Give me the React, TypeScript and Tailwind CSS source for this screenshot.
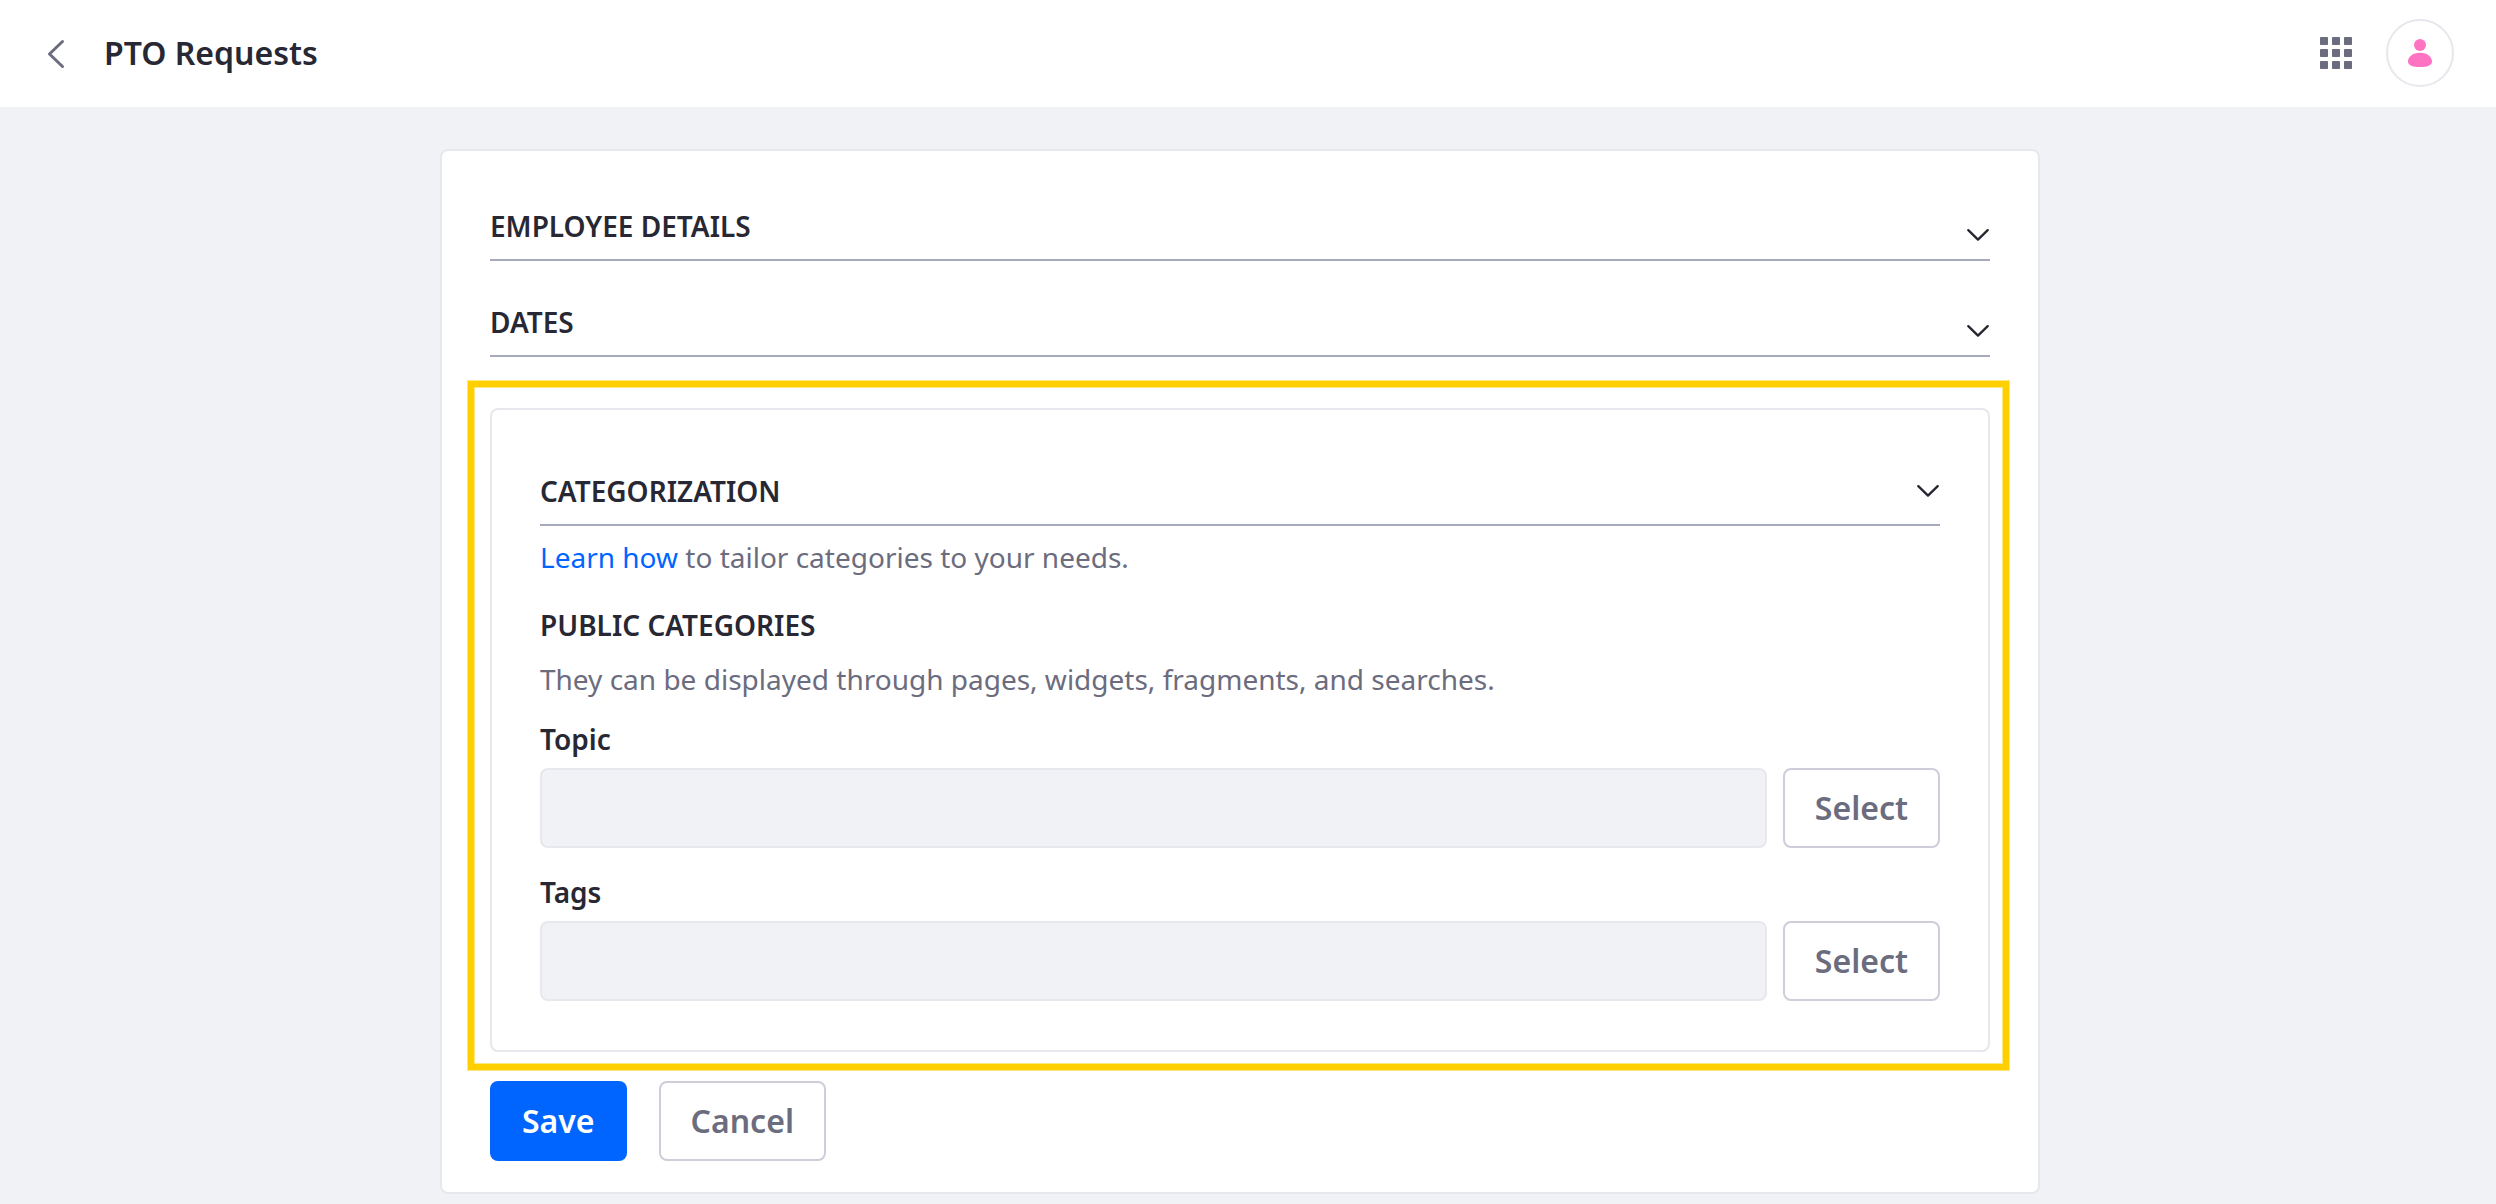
import { useState } from "react";
import type { ReactNode } from "react";

function ChevronDown() {
  return (
    <svg className="size-6 shrink-0" viewBox="0 0 24 24" fill="none" aria-hidden="true">
      <path
        d="M2.3 7.2 12 16.6l9.700-9.400"
        stroke="currentColor"
        strokeWidth="2.4"
        strokeLinecap="round"
        strokeLinejoin="round"
      />
    </svg>
  );
}

function SectionToggle({ title, align }: { title: string; align: "end" | "center" }) {
  const [open, setOpen] = useState(align === "center");
  return (
    <h2>
      <button
        type="button"
        aria-expanded={open}
        onClick={() => setOpen(!open)}
        className={
          align === "end"
            ? "flex w-full items-end justify-between border-b-2 border-[#a7a9bc] pb-3 text-left font-semibold uppercase"
            : "flex w-full items-center justify-between border-b-2 border-[#a7a9bc] pb-3 text-left font-semibold uppercase"
        }
      >
        <span>{title}</span>
        <ChevronDown />
      </button>
    </h2>
  );
}

function OutlineButton({ children, label }: { children: ReactNode; label?: string }) {
  return (
    <button
      type="button"
      aria-label={label}
      className="h-20 shrink-0 rounded-lg border-2 border-[#cdced9] bg-white px-[30px] text-[32px] leading-[48px] font-semibold text-[#6b6c7e]"
    >
      {children}
    </button>
  );
}

function SelectField({ id, label }: { id: string; label: string }) {
  return (
    <div className="flex flex-col gap-2">
      <label htmlFor={id} className="font-semibold">
        {label}
      </label>
      <div className="flex gap-4">
        <input
          id={id}
          type="text"
          className="h-20 min-w-0 flex-1 rounded-lg border-2 border-[#e7e7ed] bg-[#f1f2f5] px-6"
        />
        <OutlineButton label={`Select ${label}`}>Select</OutlineButton>
      </div>
    </div>
  );
}

function Header() {
  const cells = [0, 12, 24];
  return (
    <header className="flex h-[107px] items-center bg-white pr-[42px] pb-px pl-10">
      <a href="#back" aria-label="Back" className="text-[#6b6c7e]">
        <svg className="size-8" viewBox="0 0 32 32" fill="none" aria-hidden="true">
          <path
            d="M22.500 4.500 9.500 17l13 12.500"
            stroke="currentColor"
            strokeWidth="3"
            strokeLinecap="round"
            strokeLinejoin="round"
          />
        </svg>
      </a>
      <h1 className="ml-8 text-[32px] leading-[48px] font-semibold">PTO Requests</h1>
      <div className="ml-auto flex items-center gap-[34px]">
        <button type="button" aria-label="Applications" className="text-[#6b6c7e]">
          <svg className="size-8" viewBox="0 0 32 32" fill="currentColor" aria-hidden="true">
            {cells.map((y) =>
              cells.map((x) => <rect key={`${x}-${y}`} x={x} y={y} width="8" height="8" rx="0.8" />),
            )}
          </svg>
        </button>
        <button
          type="button"
          aria-label="User profile"
          className="flex size-[68px] items-center justify-center rounded-full border-2 border-[#e7e7ed] text-[#ff73c3]"
        >
          <svg className="h-7 w-6" viewBox="0 0 24 28" fill="currentColor" aria-hidden="true">
            <circle cx="12" cy="6" r="6" />
            <path d="M12 13.800c7.500 0 12 4.200 12 8.600 0 4-4.800 5.600-12 5.600s-12-1.600-12-5.600c0-4.400 4.500-8.600 12-8.600Z" />
          </svg>
        </button>
      </div>
    </header>
  );
}

export default function App() {
  return (
    <div className="min-h-screen bg-[#f1f2f5] font-['Noto_Sans',sans-serif] text-[28px] leading-[42px] text-[#272833]">
      <Header />
      <main className="pt-[42px] pr-4 pb-2.5">
        <form className="mx-auto max-w-[1600px] rounded-lg border-2 border-[#e7e7ed] bg-white px-12 pt-[54px] pb-[31px]">
          <div className="flex flex-col gap-10">
            <SectionToggle title="Employee Details" align="end" />
            <SectionToggle title="Dates" align="end" />
          </div>

          <div className="mt-6 -mr-[19px] -ml-[22px] border-[6px] border-[#ffcf00] pt-[21px] pr-[13px] pb-3 pl-4 shadow-[0_0_0_1px_#ffe780,inset_0_0_0_1px_#ffe780]">
            <section className="rounded-lg border-2 border-[#e7e7ed] px-12 pt-[60px] pb-[49px]">
              <SectionToggle title="Categorization" align="center" />
              <p className="mt-2.5 text-[#6b6c7e]">
                <a href="#learn" className="text-[#0065ff]">
                  Learn how
                </a>{" "}
                to tailor categories to your needs.
              </p>
              <h3 className="mt-[26px] font-semibold uppercase">Public Categories</h3>
              <p className="mt-3 text-[#6b6c7e]">
                They can be displayed through pages, widgets, fragments, and searches.
              </p>
              <div className="mt-[18px] flex flex-col gap-[23px]">
                <SelectField id="topic" label="Topic" />
                <SelectField id="tags" label="Tags" />
              </div>
            </section>
          </div>

          <div className="mt-[11px] flex gap-8">
            <button
              type="submit"
              className="h-20 rounded-lg bg-[#0065ff] px-8 text-[32px] leading-[48px] font-semibold text-white"
            >
              Save
            </button>
            <OutlineButton>Cancel</OutlineButton>
          </div>
        </form>
      </main>
    </div>
  );
}
